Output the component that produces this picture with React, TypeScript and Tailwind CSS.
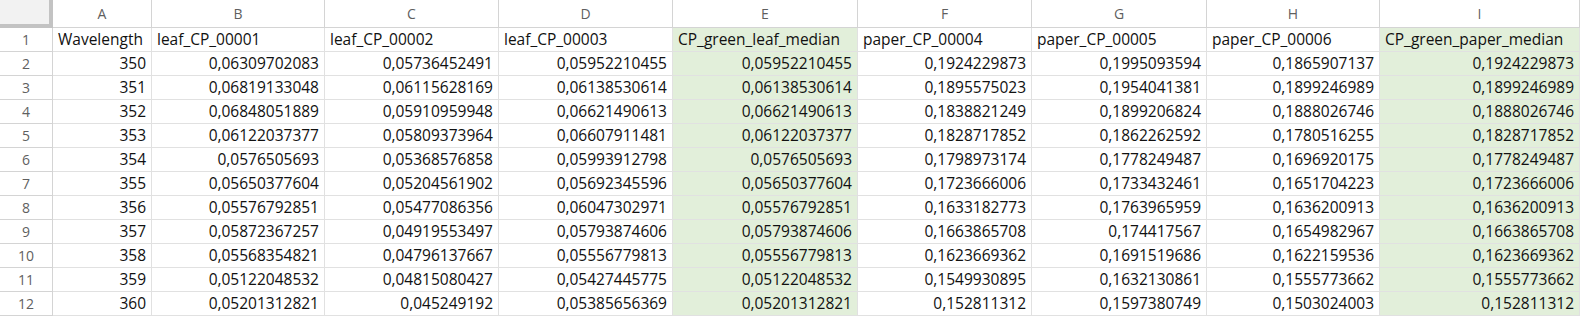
const columns = ["A", "B", "C", "D", "E", "F", "G", "H", "I"];

const widths = ["w-[99px]", "w-[173px]", "w-[174px]", "w-[174px]", "w-[185px]", "w-[174px]", "w-[175px]", "w-[173px]", "w-[200px]"];

// E and I hold the medians, shaded green
const green = [false, false, false, false, true, false, false, false, true];

const header = [
  "Wavelength",
  "leaf_CP_00001",
  "leaf_CP_00002",
  "leaf_CP_00003",
  "CP_green_leaf_median",
  "paper_CP_00004",
  "paper_CP_00005",
  "paper_CP_00006",
  "CP_green_paper_median",
];

const rows = [
  ["350", "0,06309702083", "0,05736452491", "0,05952210455", "0,05952210455", "0,1924229873", "0,1995093594", "0,1865907137", "0,1924229873"],
  ["351", "0,06819133048", "0,06115628169", "0,06138530614", "0,06138530614", "0,1895575023", "0,1954041381", "0,1899246989", "0,1899246989"],
  ["352", "0,06848051889", "0,05910959948", "0,06621490613", "0,06621490613", "0,1838821249", "0,1899206824", "0,1888026746", "0,1888026746"],
  ["353", "0,06122037377", "0,05809373964", "0,06607911481", "0,06122037377", "0,1828717852", "0,1862262592", "0,1780516255", "0,1828717852"],
  ["354", "0,0576505693", "0,05368576858", "0,05993912798", "0,0576505693", "0,1798973174", "0,1778249487", "0,1696920175", "0,1778249487"],
  ["355", "0,05650377604", "0,05204561902", "0,05692345596", "0,05650377604", "0,1723666006", "0,1733432461", "0,1651704223", "0,1723666006"],
  ["356", "0,05576792851", "0,05477086356", "0,06047302971", "0,05576792851", "0,1633182773", "0,1763965959", "0,1636200913", "0,1636200913"],
  ["357", "0,05872367257", "0,04919553497", "0,05793874606", "0,05793874606", "0,1663865708", "0,174417567", "0,1654982967", "0,1663865708"],
  ["358", "0,05568354821", "0,04796137667", "0,05556779813", "0,05556779813", "0,1623669362", "0,1691519686", "0,1622159536", "0,1623669362"],
  ["359", "0,05122048532", "0,04815080427", "0,05427445775", "0,05122048532", "0,1549930895", "0,1632130861", "0,1555773662", "0,1555773662"],
  ["360", "0,05201312821", "0,045249192", "0,05385656369", "0,05201312821", "0,152811312", "0,1597380749", "0,1503024003", "0,152811312"],
];

function Cell({ i, children, right }: { i: number; children: React.ReactNode; right?: boolean }) {
  return (
    <div
      className={`${widths[i]} shrink-0 h-[24px] border-r border-b border-[#e1e1e1] flex items-center px-[5px] whitespace-nowrap overflow-hidden ${
        right ? "justify-end" : "justify-start"
      } ${green[i] ? "bg-[#e2efda]" : "bg-white"}`}
    >
      {children}
    </div>
  );
}

export default function App() {
  return (
    <div
      className="w-[1580px] h-[318px] overflow-hidden bg-white text-[15.5px] text-[#111]"
      style={{ fontFamily: '"Open Sans", "Noto Sans", sans-serif' }}
    >
      <div className="flex h-[28px]">
        <div className="w-[53px] shrink-0 h-[28px] bg-[#f2f2f2] border-r-[4px] border-b-[4px] border-[#c3c3c3]" />
        {columns.map((c, i) => (
          <div
            key={c}
            className={`${widths[i]} shrink-0 h-[28px] bg-white border-r border-b border-[#d4d4d4] flex items-center justify-center text-[14px] text-[#5f5f5f]`}
          >
            {c}
          </div>
        ))}
      </div>

      <div className="flex">
        <div className="w-[53px] shrink-0 h-[24px] border-r border-b border-[#d4d4d4] flex items-center justify-center text-[14px] text-[#5f5f5f]">
          1
        </div>
        {header.map((h, i) => (
          <Cell key={h} i={i}>
            {h}
          </Cell>
        ))}
      </div>

      {rows.map((r, n) => (
        <div key={n} className="flex">
          <div className="w-[53px] shrink-0 h-[24px] border-r border-b border-[#d4d4d4] flex items-center justify-center text-[14px] text-[#5f5f5f]">
            {n + 2}
          </div>
          {r.map((v, i) => (
            <Cell key={i} i={i} right>
              {v}
            </Cell>
          ))}
        </div>
      ))}
    </div>
  );
}
